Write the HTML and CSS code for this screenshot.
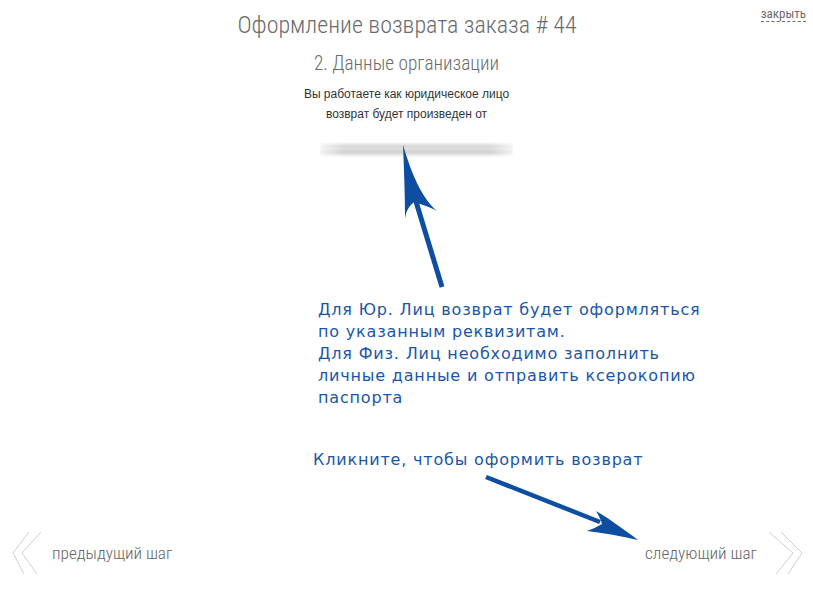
FILE: index.html
```html
<!DOCTYPE html>
<html lang="ru">
<head>
<meta charset="utf-8">
<title>Оформление возврата заказа # 44</title>
<link rel="stylesheet" href="styles.css">
</head>
<body>
<div class="page">
  <a class="close" href="#">закрыть</a>
  <header class="head">
    <h1 class="title">Оформление возврата заказа # 44</h1>
    <h2 class="step">2. Данные организации</h2>
    <p class="info">Вы работаете как юридическое лицо<br>возврат будет произведен от</p>
    <div class="blur"></div>
  </header>

  <div class="note note-main">Для Юр. Лиц возврат будет оформляться<br>по указанным реквизитам.<br>Для Физ. Лиц необходимо заполнить<br>личные данные и отправить ксерокопию<br>паспорта</div>
  <div class="note note-click">Кликните, чтобы оформить возврат</div>

  <svg class="arrows" width="813" height="604" viewBox="0 0 813 604">
    <line x1="442" y1="287" x2="414" y2="195" stroke="#0d4ea3" stroke-width="5"/>
    <path d="M403 145 C412 175 422 198 437 211 C428 206 420 204 414 202 C408 207 406 212 405 219 C405 195 404 170 403 145 Z" fill="#0d4ea3"/>
    <line x1="486" y1="477" x2="600" y2="522" stroke="#0d4ea3" stroke-width="4.5"/>
    <path d="M638 540 C622 528 608 518 596 511 C599 516 601 520 602 524 C597 527 592 529 587 531 C604 533 621 536 638 540 Z" fill="#0d4ea3"/>
  </svg>

  <nav class="steps">
    <a class="nav prev" href="#">
      <svg class="chev" width="36" height="46" viewBox="0 0 36 46"><polyline points="21,2 5,23 16,44" fill="none" stroke="#d0d0d0" stroke-width="1"/><polyline points="33,2 14,23 29,44" fill="none" stroke="#d0d0d0" stroke-width="1"/></svg>
      <span>предыдущий шаг</span>
    </a>
    <a class="nav next" href="#">
      <span>следующий шаг</span>
      <svg class="chev" width="40" height="46" viewBox="0 0 40 46"><polyline points="4,2 28,23 11,44" fill="none" stroke="#d0d0d0" stroke-width="1"/><polyline points="16,2 37,23 23,44" fill="none" stroke="#d0d0d0" stroke-width="1"/></svg>
    </a>
  </nav>
</div>
</body>
</html>
```
FILE: styles.css
```css
html, body {
  margin: 0;
  padding: 0;
  background: #fff;
}
.page {
  position: relative;
  width: 813px;
  height: 604px;
  overflow: hidden;
  font-family: Roboto, "Liberation Sans", sans-serif;
  font-stretch: 85%;
}
.close {
  position: absolute;
  top: 6px;
  right: 7px;
  font-size: 13px;
  color: #6a6a6a;
  text-decoration: none;
  border-bottom: 1px dashed #6a6a6a;
  line-height: 15px;
}
.head {
  display: flex;
  flex-direction: column;
  align-items: center;
  padding-top: 10px;
}
.title {
  margin: 0;
  font-weight: 300;
  font-size: 24px;
  line-height: 30px;
  color: #6b6b6b;
  padding-left: 1px;
}
.step {
  margin: 12px 0 0;
  font-weight: 300;
  font-size: 19.3px;
  line-height: 24px;
  color: #6b6b6b;
}
.info {
  margin: 8px 0 0;
  font-family: "Liberation Sans", Arial, sans-serif;
  font-size: 12px;
  line-height: 20px;
  text-align: center;
  color: #333;
}
.blur {
  margin-top: 18px;
  margin-left: 20px;
  width: 193px;
  height: 15px;
  background:
    linear-gradient(180deg, rgba(255,255,255,0) 0%, #e4e4e4 18%, #d0d0d0 32%, #eaeaea 48%, #c9c9c9 62%, #d8d8d8 76%, rgba(255,255,255,0) 100%);
  -webkit-mask-image: linear-gradient(90deg, rgba(0,0,0,0.3), #000 12%, #000 88%, rgba(0,0,0,0.3));
  mask-image: linear-gradient(90deg, rgba(0,0,0,0.3), #000 12%, #000 88%, rgba(0,0,0,0.3));
  filter: blur(1px);
}
.note {
  position: absolute;
  font-family: "DejaVu Sans", Verdana, sans-serif;
  font-stretch: 100%;
  color: #1a56a8;
  font-size: 16px;
  line-height: 22px;
  letter-spacing: 0.82px;
}
.note-main {
  left: 318px;
  top: 299px;
}
.note-click {
  left: 313px;
  top: 449px;
}
.arrows {
  position: absolute;
  left: 0;
  top: 0;
  pointer-events: none;
}
.steps {
  position: absolute;
  left: 0;
  right: 0;
  top: 530px;
  display: flex;
  justify-content: space-between;
  align-items: center;
  padding: 0 8px;
}
.nav {
  display: flex;
  align-items: center;
  gap: 8px;
  text-decoration: none;
  color: #666;
  font-weight: 300;
  font-size: 17.3px;
}
```
